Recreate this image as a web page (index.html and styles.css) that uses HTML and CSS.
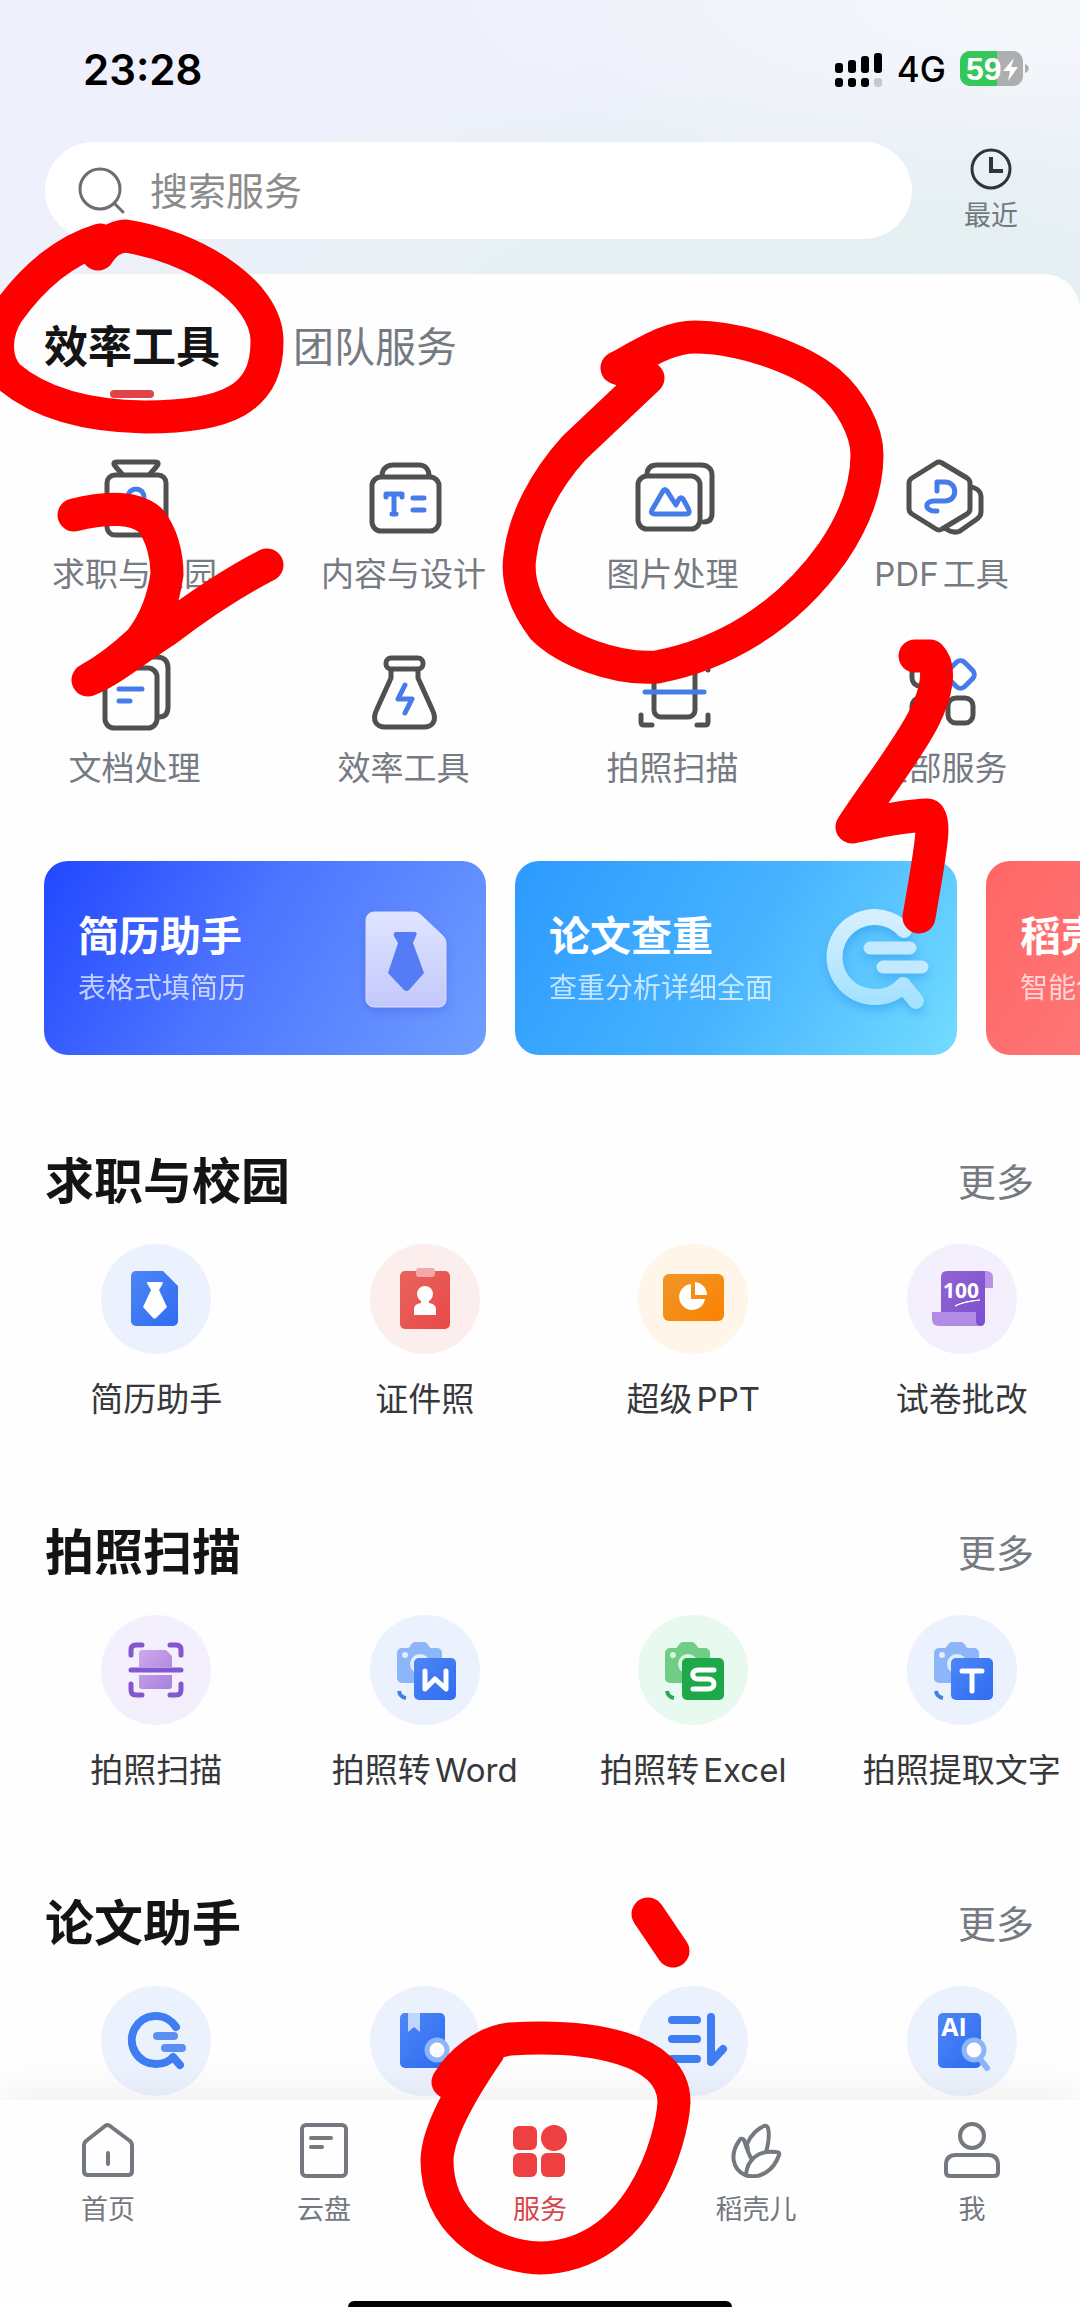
FILE: index.html
```html
<!DOCTYPE html>
<html lang="zh-CN">
<head>
<meta charset="utf-8">
<meta name="viewport" content="width=device-width, initial-scale=1">
<title>服务</title>
<link rel="stylesheet" href="styles.css">
</head>
<body>
<svg class="defs" width="0" height="0" aria-hidden="true">
  <defs>
    <linearGradient id="blue" x1="0" y1="0" x2="1" y2="1"><stop offset="0" stop-color="#4c86f7"/><stop offset="1" stop-color="#2f6cf0"/></linearGradient>
    <linearGradient id="red" x1="0" y1="0" x2="1" y2="1"><stop offset="0" stop-color="#e8635e"/><stop offset="1" stop-color="#e84a47"/></linearGradient>
    <linearGradient id="orange" x1="0" y1="0" x2="1" y2="1"><stop offset="0" stop-color="#f0962a"/><stop offset="1" stop-color="#fb8200"/></linearGradient>
    <linearGradient id="purple" x1="0" y1="0" x2="1" y2="1"><stop offset="0" stop-color="#9163d4"/><stop offset="1" stop-color="#7c4fd0"/></linearGradient>
    <linearGradient id="lilac" x1="0" y1="0" x2="1" y2="1"><stop offset="0" stop-color="#cfa8ee"/><stop offset="1" stop-color="#a780dc"/></linearGradient>
    <linearGradient id="glass" x1="0" y1="0" x2="0" y2="1"><stop offset="0" stop-color="#dfe5ff"/><stop offset="1" stop-color="#c3c8fb"/></linearGradient>
    <linearGradient id="ice" x1="0" y1="0" x2="0" y2="1"><stop offset="0" stop-color="#d5efff"/><stop offset="1" stop-color="#a5e2ff"/></linearGradient>
    <g id="camera">
      <path d="M32 33h6c2 0 3-6 7-6h9c4 0 5 6 7 6h6a5 5 0 0 1 5 5v30H32a5 5 0 0 1-5-5V38a5 5 0 0 1 5-5z"/>
      <circle cx="35" cy="40" r="3" fill="#fff" fill-opacity=".75"/>
      <circle cx="50" cy="49" r="8" fill="none" stroke="#fff" stroke-opacity=".75" stroke-width="4"/>
    </g>
  </defs>
</svg>

<header class="top">
  <div class="status">
    <time class="clock">23:28</time>
    <div class="signals">
      <svg width="48" height="36" viewBox="0 0 48 36" aria-hidden="true">
        <g fill="#000"><rect y="12" width="8" height="10" rx="3"/><rect x="13" y="9" width="8" height="13" rx="3"/><rect x="26" y="5" width="8" height="17" rx="3"/><rect x="39" y="2" width="8" height="20" rx="3"/><rect y="27" width="8" height="9" rx="3"/><rect x="13" y="27" width="8" height="9" rx="3"/><rect x="26" y="27" width="8" height="9" rx="3"/></g>
        <rect x="39" y="27" width="8" height="9" rx="3" fill="#c5c8ce"/>
      </svg>
      <span class="network">4G</span>
      <svg width="70" height="36" viewBox="0 0 70 36" role="img" aria-label="电量 59%">
        <rect width="63" height="35" rx="10" fill="#acaeb0"/>
        <path d="M10 0H37V35H10A10 10 0 0 1 0 25V10A10 10 0 0 1 10 0z" fill="#35c759"/>
        <path d="M65 13c5 1 5 8 0 9z" fill="#acaeb0"/>
        <text x="6" y="29" class="battery-text">59</text>
        <path d="M54 7 43 20h7l-2 10 10-14h-7z" fill="#fff"/>
      </svg>
    </div>
  </div>
  <div class="search-row">
    <form class="search" role="search">
      <svg width="48" height="48" viewBox="0 0 48 48" fill="none" stroke="#6b6d70" stroke-width="3" stroke-linecap="round" aria-hidden="true"><circle cx="22" cy="22" r="20"/><path d="M36 36l9 9"/></svg>
      <input type="search" placeholder="搜索服务" aria-label="搜索服务">
    </form>
    <a class="recent" href="#recent">
      <svg width="44" height="44" viewBox="0 0 44 44" fill="none" stroke="#303638" stroke-width="3" aria-hidden="true"><circle cx="22" cy="22" r="19"/><path d="M22 10v14h12" stroke-width="4"/></svg>
      <span>最近</span>
    </a>
  </div>
</header>

<main class="panel">
  <nav class="tabs">
    <a class="tab active" href="#tools">效率工具</a>
    <a class="tab" href="#team">团队服务</a>
  </nav>

  <div class="tools">
    <a class="tool" href="#t1"><svg class="line-icon" viewBox="0 0 84 84"><path d="M29 16 22 8q-3-4 2-4h38q5 0 2 4l-7 8"/><rect x="14" y="17" width="59" height="60" rx="8"/><g class="accent"><circle cx="43" cy="39" r="8"/><path d="M29 65c2-20 27-20 29 0z"/></g></svg><span>求职与校园</span></a>
    <a class="tool" href="#t2"><svg class="line-icon" viewBox="0 0 84 84"><path d="M20 18C20 10 26 7 31 7h26c6 0 10 4 10 11"/><rect x="10" y="19" width="67" height="54" rx="9"/><g class="accent"><path d="M24 39v-3h16v3M32 36v20M30 56h4M51 40h11M51 52h11"/></g></svg><span>内容与设计</span></a>
    <a class="tool" href="#t3"><svg class="line-icon" viewBox="0 0 84 84"><path d="M16 17C16 10 20 7 26 7h44c7 0 11 4 11 10v38c0 6-3 9-8 9"/><rect x="7" y="18" width="62" height="53" rx="9"/><path class="accent" d="M32 33q2-3 4 0l9 14 3-6q2-2 4 0l5 9q3 6-2 6H24q-5 0-3-4z"/></svg><span>图片处理</span></a>
    <a class="tool" href="#t4"><svg class="line-icon" viewBox="0 0 84 84"><path d="M36 5q3-2 6 0l25 15q3 2 3 5v26q0 3-3 5L42 71q-3 2-6 0L12 56q-3-2-3-5V25q0-3 3-5zM72 29q9 3 9 9v16q0 4-4 7L60 73q-6 3-14-2"/><path class="accent" d="M37 33v-9h8c13 0 13 19 0 19H34c-10 0-10 11 3 10"/></svg><span>PDF工具</span></a>
    <a class="tool" href="#t5"><svg class="line-icon" viewBox="0 0 84 84"><path d="M24 14c0-6 4-9 10-9h30c7 0 11 4 11 11v39c0 7-3 10-9 10"/><rect x="12" y="16" width="52" height="60" rx="9"/><path class="accent" d="M26 37h23M26 49h11"/></svg><span>文档处理</span></a>
    <a class="tool" href="#t6"><svg class="line-icon" viewBox="0 0 84 84"><rect x="24" y="6" width="37" height="11" rx="5"/><path d="M29 18v8L15 57C9 69 15 75 23 75h39c8 0 14-6 8-18L56 26v-8"/><path class="accent" d="M43 33l-7 14h14l-7 14"/></svg><span>效率工具</span></a>
    <a class="tool" href="#t7"><svg class="line-icon" viewBox="0 0 84 84"><rect x="23" y="14" width="41" height="51" rx="7"/><path d="M10 18V9q0-3 3-3h8M66 6h8q3 0 3 3v9M10 63v7q0 3 3 3h8M66 73h8q3 0 3-3v-7"/><path class="accent" d="M14 40h59"/></svg><span>拍照扫描</span></a>
    <a class="tool" href="#t8"><svg class="line-icon" viewBox="0 0 84 84"><rect x="12" y="9" width="25" height="25" rx="8"/><rect x="12" y="46" width="25" height="25" rx="8"/><rect x="48" y="46" width="25" height="25" rx="8"/><rect class="accent" x="49" y="11" width="23" height="23" rx="6" transform="rotate(45 60.5 22.5)"/></svg><span>全部服务</span></a>
  </div>

  <div class="cards">
    <a class="card resume" href="#resume">
      <div><h3>简历助手</h3><p>表格式填简历</p></div>
      <svg class="art" viewBox="0 0 108 108" aria-hidden="true"><path d="M22 7h40q4 0 7 3l22 21q3 3 3 7v57a7 7 0 0 1-7 7H22a8 8 0 0 1-8-8V15a8 8 0 0 1 8-8z" fill="url(#glass)" stroke="#dedffc" stroke-width="1"/><path d="M44 27h18q4 0 2 4l-3 7 11 30-15 17q-3 2-5 0L36 68l10-30-4-7q-1-4 2-4z" fill="#557cf5"/></svg>
    </a>
    <a class="card paper" href="#paper">
      <div><h3>论文查重</h3><p>查重分析详细全面</p></div>
      <svg class="art" viewBox="0 0 108 108" fill="none" stroke="url(#ice)" stroke-width="16" stroke-linecap="round" stroke-linejoin="round" aria-hidden="true"><path d="M81 25A40 40 0 1 0 52 92Q70 92 80 80L93 96"/><path d="M47 43h40M60 62h39" stroke="#c2e9ff" stroke-width="13"/></svg>
    </a>
    <a class="card docer" href="#docer">
      <div><h3>稻壳</h3><p>智能创</p></div>
    </a>
  </div>

  <section class="group">
    <div class="group-head"><h2>求职与校园</h2><a href="#more1">更多</a></div>
    <div class="items">
      <a class="item" href="#i1"><svg class="badge tint-blue" viewBox="0 0 110 110"><path d="M35 27h27l15 15v35a5 5 0 0 1-5 5H35a5 5 0 0 1-5-5V32a5 5 0 0 1 5-5z" fill="url(#blue)"/><path d="M47 38h13q3 0 1 3l-3 5 8 17-11 11q-1 1-3 0L42 63l8-17-3-5q-2-3 0-3z" fill="#fff"/></svg><span>简历助手</span></a>
      <a class="item" href="#i2"><svg class="badge tint-red" viewBox="0 0 110 110"><rect x="30" y="27" width="50" height="58" rx="5" fill="url(#red)"/><rect x="46" y="24" width="19" height="9" rx="3" fill="#f5a8a8"/><circle cx="55" cy="50" r="8" fill="#fff"/><path d="M51 55h8v4q7 1 7 6v6H44v-6q0-5 7-6z" fill="#fff"/></svg><span>证件照</span></a>
      <a class="item" href="#i3"><svg class="badge tint-orange" viewBox="0 0 110 110"><rect x="25" y="30" width="61" height="47" rx="6" fill="url(#orange)"/><path d="M53 40v15h14A13 13 0 1 1 53 40z" fill="#fff"/><path d="M57 38a13 13 0 0 1 12 13H57z" fill="#fff"/></svg><span>超级PPT</span></a>
      <a class="item" href="#i4"><svg class="badge tint-purple" viewBox="0 0 110 110"><path d="M77 27h2q7 0 7 7v10h-9z" fill="#b793e6"/><path d="M40 27h38v50q0 5-5 5H34V33q0-6 6-6z" fill="url(#purple)"/><path d="M25 68h44v9q0 5 5 5H32q-7 0-7-7z" fill="#b28ce4"/><text x="54" y="54" class="mark mark-score">100</text><path d="M48 62q9-5 25-6-17 2-25 6z" fill="#fff" stroke="#fff"/></svg><span>试卷批改</span></a>
    </div>
  </section>

  <section class="group">
    <div class="group-head"><h2>拍照扫描</h2><a href="#more2">更多</a></div>
    <div class="items">
      <a class="item" href="#i5"><svg class="badge tint-purple" viewBox="0 0 110 110"><path d="M41 35h24l6 6v11H38V38q0-3 3-3zM38 60h33v11q0 3-3 3H41q-3 0-3-3z" fill="url(#lilac)"/><path d="M30 40v-5q0-5 5-5h6M69 30h6q5 0 5 5v5M30 69v6q0 5 5 5h6M69 80h6q5 0 5-5v-6M30 55h50" fill="none" stroke="#8557cc" stroke-width="5" stroke-linecap="round"/></svg><span>拍照扫描</span></a>
      <a class="item" href="#i6"><svg class="badge tint-blue" viewBox="0 0 110 110"><use href="#camera" fill="#8db6fa"/><path d="M29 76q1 6 7 7" fill="none" stroke="#4380e6" stroke-width="4"/><rect x="44" y="43" width="42" height="42" rx="5" fill="url(#blue)"/><path d="M55 56v18l10-10 11 10V56" class="glyph-line"/></svg><span>拍照转Word</span></a>
      <a class="item" href="#i7"><svg class="badge tint-green" viewBox="0 0 110 110"><use href="#camera" fill="#6fce83"/><path d="M29 76q1 6 7 7" fill="none" stroke="#2ca653" stroke-width="4"/><rect x="44" y="43" width="42" height="42" rx="5" fill="#1da84a"/><path d="M76 55H60c-7 0-7 9 0 9h10c8 0 8 10 0 10H55" class="glyph-line"/></svg><span>拍照转Excel</span></a>
      <a class="item" href="#i8"><svg class="badge tint-blue" viewBox="0 0 110 110"><use href="#camera" fill="#8db6fa"/><path d="M29 76q1 6 7 7" fill="none" stroke="#4380e6" stroke-width="4"/><rect x="44" y="43" width="42" height="42" rx="5" fill="url(#blue)"/><path d="M55 56h20M65 56v20" class="glyph-line"/></svg><span>拍照提取文字</span></a>
    </div>
  </section>

  <section class="group last">
    <div class="group-head"><h2>论文助手</h2><a href="#more3">更多</a></div>
    <div class="items">
      <a class="item" href="#i9" aria-label="论文查重"><svg class="badge tint-blue" viewBox="0 0 110 110"><path d="M75 41A24 24 0 1 0 55 78Q66 78 72 71l7 8" fill="none" stroke="#3f7df3" stroke-width="8" stroke-linecap="round" stroke-linejoin="round"/><path d="M56 50h17M64 62h17" stroke="#5b90f3" stroke-width="8" stroke-linecap="round"/></svg></a>
      <a class="item" href="#i10" aria-label="论文检索"><svg class="badge tint-blue" viewBox="0 0 110 110"><rect x="30" y="27" width="45" height="55" rx="5" fill="url(#blue)"/><path d="M38 27h12v19l-6-5-6 5z" fill="#bfd6fd"/><path d="M74 73l5 8" stroke="#8db6fa" stroke-width="6" stroke-linecap="round"/><circle cx="67" cy="64" r="10" fill="#fff" stroke="#8db6fa" stroke-width="5"/></svg></a>
      <a class="item" href="#i11" aria-label="论文排版"><svg class="badge tint-blue" viewBox="0 0 110 110"><path d="M34 34h25M34 53h25M34 73h25M73 31v45l12-13" fill="none" stroke="#3f7df3" stroke-width="8" stroke-linecap="round" stroke-linejoin="round"/></svg></a>
      <a class="item" href="#i12" aria-label="AI 检测"><svg class="badge tint-blue" viewBox="0 0 110 110"><rect x="31" y="27" width="43" height="55" rx="5" fill="url(#blue)"/><text x="47" y="50" class="mark mark-ai">AI</text><path d="M73 73l7 9" stroke="#8db6fa" stroke-width="6" stroke-linecap="round"/><circle cx="67" cy="64" r="10" fill="#fff" stroke="#8db6fa" stroke-width="5"/></svg></a>
    </div>
  </section>
</main>

<nav class="tabbar">
  <div class="tabbar-items">
    <a href="#home"><svg viewBox="0 0 56 56"><path d="M25 4q3-2 5 0l20 15q2 2 2 4v26q0 4-4 4H8q-4 0-4-4V23q0-2 2-4zM28 31v11"/></svg><span>首页</span></a>
    <a href="#drive"><svg viewBox="0 0 56 56"><rect x="6" y="3" width="44" height="51" rx="4"/><path d="M15 16h20M15 25h11"/></svg><span>云盘</span></a>
    <a class="active" href="#service"><svg viewBox="0 0 56 56"><rect x="1" y="4" width="24" height="24" rx="6"/><circle cx="42" cy="16" r="13"/><rect x="1" y="31" width="24" height="24" rx="6"/><rect x="29" y="31" width="24" height="24" rx="6"/></svg><span>服务</span></a>
    <a href="#docer-home"><svg viewBox="0 0 56 56"><path d="M19 22C23 12 31 6 36 4q3-1 4 2c2 8 0 17-2 24M24 38C20 31 18 24 16 18q-3-3-5 1C2 32 4 47 17 53c15 5 29-5 34-20q1-3-3-3C31 28 19 37 18 53M19 22l1 6"/></svg><span>稻壳儿</span></a>
    <a href="#me"><svg viewBox="0 0 56 56"><circle cx="28" cy="14" r="12"/><path d="M12 33h32q10 0 10 10v7q0 4-4 4H6q-4 0-4-4v-7q0-10 10-10z"/></svg><span>我</span></a>
  </div>
  <div class="home-indicator"></div>
</nav>

<svg class="ink" viewBox="0 0 1080 2307" preserveAspectRatio="none" aria-hidden="true">
  <path d="M98 254C106 242 114 237 126 236C190 246 268 290 267 342C267 400 225 417 145 417C80 416 36 400 8 376C-6 360 -6 334 8 312C34 276 66 250 100 240"/>
  <path d="M617 368C650 350 670 337 695 337C740 337 800 358 829 382C850 400 867 430 867 455C867 490 852 524 833 552C785 620 720 655 657 667C615 670 565 650 543 628C522 600 517 575 520 556C524 520 545 480 574 448L648 378L617 368"/>
  <path d="M74 515C110 506 136 508 150 520C162 534 167 556 167 574C163 604 152 626 140 641C124 656 106 670 88 680C110 672 138 648 165 631C198 606 234 582 267 565"/>
  <path d="M915 656H930C942 668 936 694 924 718C908 750 876 790 852 827C876 822 900 816 928 815C936 820 930 850 926 876L919 917"/>
  <path d="M648 1914L673 1951"/>
  <path d="M448 2082C460 2062 484 2042 510 2039C590 2034 674 2048 674 2102C672 2140 640 2256 540 2258C486 2256 437 2220 437 2160C438 2130 462 2090 488 2052"/>
</svg>
</body>
</html>
```
FILE: styles.css
```css
* { box-sizing: border-box; }

body {
  margin: 0;
  position: relative;
  overflow-x: hidden;
  background: #fefefe;
  color: #141414;
  font-family: Inter, "Noto Sans CJK SC", sans-serif;
  text-autospace: normal;
}

a { color: inherit; text-decoration: none; }
h2, h3, p { margin: 0; }
svg { display: block; flex: none; }
.defs { position: absolute; }

/* header */
.top {
  padding: 40px 45px 71px;
  margin-bottom: -36px;
  background:
    radial-gradient(ellipse 60% 60% at 100% 0, #f5f8fa, rgba(245, 248, 250, 0)),
    radial-gradient(ellipse 75% 85% at 75% 100%, #e1f0ef, rgba(225, 240, 239, 0)),
    #eef0fb;
}
.status {
  display: flex;
  justify-content: space-between;
  align-items: center;
  height: 58px;
  padding: 0 5px 0 38px;
}
.clock { font-size: 42px; font-weight: 600; color: #000; }
.signals { display: flex; align-items: center; gap: 14px; }
.network { font-size: 35px; font-weight: 500; color: #000; }
.battery-text { font: 700 32px "Liberation Sans", sans-serif; fill: #fff; }

.search-row {
  display: flex;
  align-items: center;
  gap: 43px;
  margin-top: 44px;
  padding-right: 8px;
}
.search {
  display: flex;
  align-items: center;
  gap: 24px;
  flex: 1;
  height: 97px;
  padding: 0 33px;
  border-radius: 49px;
  background: #fff;
}
.search input {
  flex: 1;
  min-width: 0;
  border: 0;
  padding: 0;
  background: none;
  outline: none;
  font: inherit;
  font-size: 38px;
}
.search input::placeholder { color: #8b8b8b; opacity: 1; }
.recent {
  display: flex;
  flex-direction: column;
  align-items: center;
  gap: 7px;
  width: 72px;
  font-size: 27px;
  line-height: 36px;
  color: #717a7a;
}

/* content panel */
.panel {
  position: relative;
  padding-top: 46px;
  border-radius: 36px 36px 0 0;
  background: #fefefe;
  overflow: hidden;
}
.tabs { display: flex; gap: 73px; padding: 0 44px; }
.tab { font-size: 41px; line-height: 54px; color: #757a82; }
.tab.active {
  display: flex;
  flex-direction: column;
  align-items: center;
  gap: 16px;
  font-size: 44px;
  font-weight: 700;
  color: #141414;
}
.tab.active::after {
  content: "";
  width: 44px;
  height: 8px;
  border-radius: 4px;
  background: #e04448;
}

.tools {
  display: grid;
  grid-template-columns: repeat(4, 1fr);
  row-gap: 56px;
  padding: 60px 4px 0 0;
}
.tool {
  display: flex;
  flex-direction: column;
  align-items: center;
  gap: 10px;
  font-size: 33px;
  line-height: 44px;
  color: #767a82;
}
.line-icon {
  width: 84px;
  height: 84px;
  fill: none;
  stroke: #505050;
  stroke-width: 5;
  stroke-linecap: round;
  stroke-linejoin: round;
}
.accent { stroke: #457cea; }

/* promo cards */
.cards { display: flex; gap: 29px; padding: 71px 0 97px 44px; }
.card {
  display: flex;
  justify-content: space-between;
  align-items: center;
  flex: 0 0 442px;
  height: 194px;
  padding: 2px 26px 0 34px;
  border-radius: 24px;
  color: #fff;
  white-space: nowrap;
}
.card h3 { font-size: 41px; font-weight: 700; line-height: 52px; }
.card p { font-size: 28px; line-height: 40px; margin-top: 6px; opacity: .7; }
.resume { background: linear-gradient(120deg, #2247ff, #4d75ff 45%, #6f9eff); }
.paper { background: linear-gradient(120deg, #2c9aff, #46b2ff 50%, #72dcff); }
.docer { background: linear-gradient(120deg, #ff6666, #ff9090); }
.art { width: 108px; height: 108px; }
.resume .art { filter: drop-shadow(0 4px 4px rgba(50, 80, 220, .3)); }
.paper .art { filter: drop-shadow(0 5px 5px rgba(20, 130, 230, .35)); }

/* service groups */
.group { padding-bottom: 102px; }
.group.last { padding-bottom: 4px; }
.group-head {
  display: flex;
  justify-content: space-between;
  align-items: center;
  height: 60px;
  padding: 0 46px 0 45px;
}
.group-head h2 { font-size: 49px; font-weight: 700; line-height: 60px; }
.group-head a { font-size: 38px; line-height: 60px; color: #767a82; }
.items {
  display: grid;
  grid-template-columns: repeat(4, 1fr);
  margin: 32px -16px 0 22px;
}
.item {
  display: flex;
  flex-direction: column;
  align-items: center;
  gap: 23px;
  font-size: 33px;
  line-height: 44px;
  color: #36383b;
  white-space: nowrap;
}
.badge { width: 110px; height: 110px; border-radius: 50%; }
.tint-blue { background: #ebf2fe; }
.tint-red { background: #fdeeee; }
.tint-orange { background: #fff5e8; }
.tint-purple { background: #f3effc; }
.tint-green { background: #e8f9f0; }
.mark { font-family: "Open Sans", sans-serif; font-weight: 700; fill: #fff; text-anchor: middle; }
.mark-score { font-size: 21px; }
.mark-ai { font-size: 25px; }
.glyph-line { fill: none; stroke: #fff; stroke-width: 5; stroke-linecap: round; stroke-linejoin: round; }

/* bottom navigation */
.tabbar {
  position: relative;
  padding-top: 22px;
  background: #fefefe;
  box-shadow: 0 -12px 36px rgba(0, 0, 0, .05);
}
.tabbar-items { display: grid; grid-template-columns: repeat(5, 1fr); }
.tabbar a {
  display: flex;
  flex-direction: column;
  align-items: center;
  gap: 14px;
  font-size: 27px;
  line-height: 36px;
  color: #74787f;
}
.tabbar svg {
  width: 56px;
  height: 56px;
  fill: none;
  stroke: #74787f;
  stroke-width: 4;
  stroke-linecap: round;
  stroke-linejoin: round;
}
.tabbar .active { color: #d9464a; }
.tabbar .active svg { fill: #ee3f41; stroke: none; }
.home-indicator {
  width: 384px;
  height: 6px;
  margin: 73px auto 0;
  border-radius: 6px 6px 0 0;
  background: #000;
}

/* hand-drawn marks over the page */
.ink {
  position: absolute;
  top: 0;
  left: 0;
  width: 100%;
  height: 100%;
  fill: none;
  stroke: #f00;
  stroke-width: 33;
  stroke-linecap: round;
  stroke-linejoin: round;
  pointer-events: none;
}
```
